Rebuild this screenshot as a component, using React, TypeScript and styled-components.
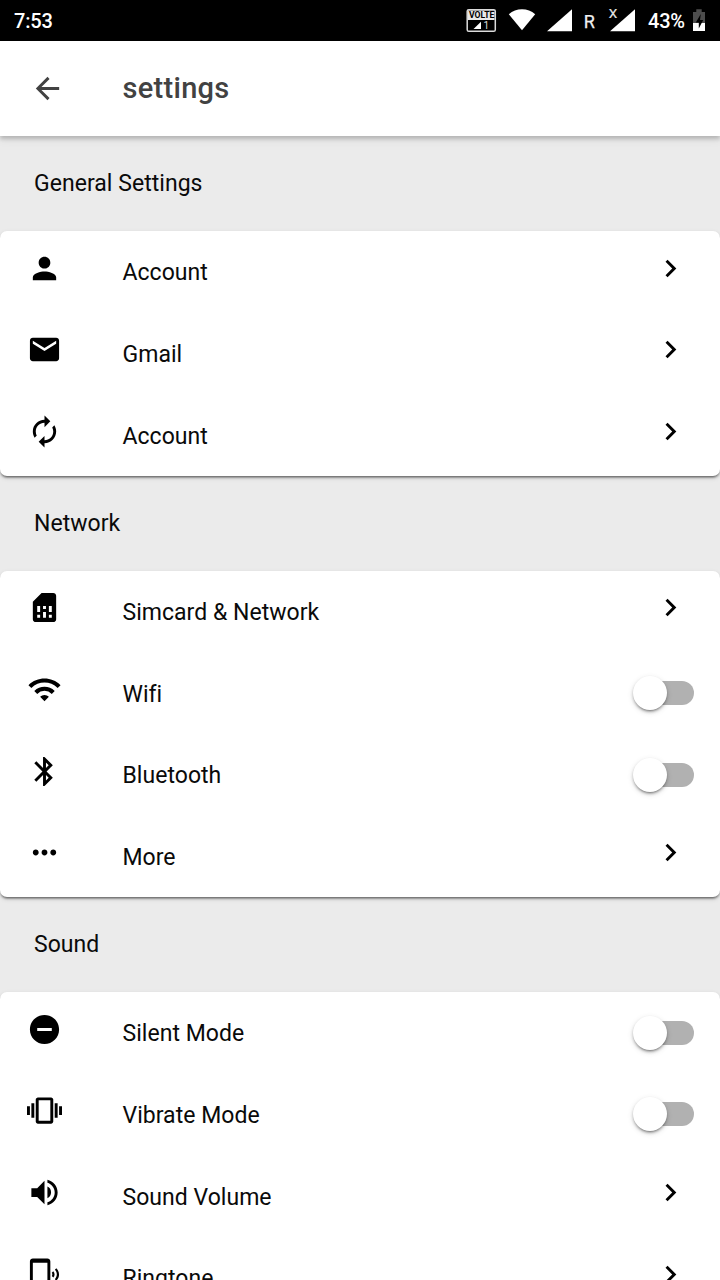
import React from "react";
import styled, { createGlobalStyle } from "styled-components";
import type { IconType } from "react-icons";
import {
  MdArrowBack,
  MdAutorenew,
  MdBluetooth,
  MdChevronRight,
  MdEmail,
  MdMoreHoriz,
  MdPerson,
  MdPhonelinkRing,
  MdRemoveCircle,
  MdSimCard,
  MdVibration,
  MdVolumeUp,
  MdWifi,
} from "react-icons/md";

const GlobalStyle = createGlobalStyle`
  * { box-sizing: border-box; }
  html, body { margin: 0; height: 100%; overflow: hidden; }
  #root { height: 100%; }
  body { background: #ebebeb; font-family: Roboto, "Liberation Sans", sans-serif; }
`;

const Screen = styled.div`
  width: 720px;
  height: 1280px;
  overflow: hidden;
  display: flex;
  flex-direction: column;
  background: #ebebeb;
  color: #0a0a0a;
`;

const StatusBar = styled.div`
  flex: none;
  height: 41px;
  padding: 0 14px;
  display: flex;
  align-items: center;
  justify-content: space-between;
  background: #000;
  color: #fff;
  font-size: 20px;
  font-weight: 500;
`;

const Clock = styled.span`
  letter-spacing: -0.15px;
`;

const StatusIcons = styled.svg`
  display: block;
  width: 254px;
  height: 41px;
  margin-right: -14px;
  font-weight: 400;
`;

const AppBar = styled.header`
  flex: none;
  height: 95px;
  display: flex;
  align-items: center;
  padding-left: 30px;
  background: #fff;
  color: #424242;
  box-shadow: 0 3px 4px rgba(0, 0, 0, 0.2), 0 6px 8px rgba(0, 0, 0, 0.04);
  z-index: 1;
`;

const BackIcon = styled(MdArrowBack)`
  width: 35px;
  height: 35px;
`;

const Title = styled.h1`
  margin: 0 0 2px 57.5px;
  font-size: 29px;
  font-weight: 500;
  letter-spacing: 0.3px;
`;

const SectionTitle = styled.h2`
  flex: none;
  height: 94.8px;
  margin: 0;
  padding-left: 34px;
  display: flex;
  align-items: center;
  font-size: 23px;
  font-weight: 400;
  letter-spacing: 0.04px;
`;

const Card = styled.section`
  flex: none;
  background: #fff;
  border-radius: 7px;
  box-shadow: 0 3px 2px -2px rgba(0, 0, 0, 0.34), 0 2px 2px rgba(0, 0, 0, 0.24),
    0 2px 5px rgba(0, 0, 0, 0.14);
`;

const Row = styled.div`
  height: 81.66px;
  display: flex;
  align-items: center;
  padding: 0 26px 0 27px;
`;

const iconBox = `
  flex: none;
  width: 35px;
  height: 35px;
  margin-bottom: 7px;
  color: #000;
`;

const RowIcon = styled.span`
  ${iconBox}
  display: flex;
  svg { width: 100%; height: 100%; }
`;

const Chevron = styled(MdChevronRight)`
  ${iconBox}
  margin-right: 6px;
`;

const Label = styled.span`
  flex: 1;
  margin-left: 60.5px;
  padding-top: 2.24px;
  font-size: 23px;
  letter-spacing: 0.03px;
`;

const Switch = styled.button`
  flex: none;
  width: 61px;
  height: 34px;
  padding: 0 0 0 5px;
  border: 0;
  background: none;
  display: flex;
  align-items: center;
`;

const Track = styled.span`
  flex: 1;
  height: 24px;
  border-radius: 12px;
  background: #b1b1b1;
  display: flex;
  align-items: center;
`;

const Thumb = styled.span`
  flex: none;
  width: 34px;
  height: 34px;
  margin-left: -5px;
  border-radius: 50%;
  background: #fff;
  box-shadow: 0 3px 2px -2px rgba(0, 0, 0, 0.3), 0 2px 3px rgba(0, 0, 0, 0.24),
    0 2px 6px rgba(0, 0, 0, 0.12);
`;

type Item = { icon: IconType; label: string; toggle?: boolean };

const sections: { title: string; items: Item[] }[] = [
  {
    title: "General Settings",
    items: [
      { icon: MdPerson, label: "Account" },
      { icon: MdEmail, label: "Gmail" },
      { icon: MdAutorenew, label: "Account" },
    ],
  },
  {
    title: "Network",
    items: [
      { icon: MdSimCard, label: "Simcard & Network" },
      { icon: MdWifi, label: "Wifi", toggle: true },
      { icon: MdBluetooth, label: "Bluetooth", toggle: true },
      { icon: MdMoreHoriz, label: "More" },
    ],
  },
  {
    title: "Sound",
    items: [
      { icon: MdRemoveCircle, label: "Silent Mode", toggle: true },
      { icon: MdVibration, label: "Vibrate Mode", toggle: true },
      { icon: MdVolumeUp, label: "Sound Volume" },
      { icon: MdPhonelinkRing, label: "Ringtone" },
    ],
  },
];

function StatusGlyphs() {
  return (
    <StatusIcons viewBox="466 0 254 41" fill="#fff" fontFamily="Roboto, sans-serif">
      <rect x="467.2" y="9.7" width="28.1" height="21.6" rx="1.6" fill="#000" stroke="#dcdcdc" strokeWidth="1.5" />
      <rect x="468" y="10.5" width="26.5" height="9.5" fill="#e8e8e8" />
      <text x="469" y="18" fontSize="8.4" fontWeight="700" fill="#000" textLength="25.4" lengthAdjust="spacingAndGlyphs">
        VOLTE
      </text>
      <path d="M473.5 29 L481 21.8 V29Z" />
      <text x="483.6" y="29" fontSize="10" fill="#ddd">1</text>
      <path d="M522 30.3 L508.8 14.3 Q514.5 9.3 522 9.3 Q529.5 9.3 535.2 14.3Z" />
      <path d="M547 31.2 L572 9.3 V31.2Z" />
      <text x="583.8" y="28.3" fontSize="18" fill="#f0f0f0" stroke="#f0f0f0" strokeWidth="0.25">R</text>
      <text x="608.8" y="18" fontSize="13.5" fill="#e8e8e8" stroke="#e8e8e8" strokeWidth="0.2">X</text>
      <path d="M610 31.2 L635 9.3 V31.2Z" />
      <text x="648" y="28" fontSize="20" fontWeight="500" textLength="37">43%</text>
      <path d="M693 12 H696.3 V9.3 H701.7 V12 H705 V23 H693Z" fill="#4d4d4d" />
      <path d="M693 23 H705 V31 H693Z" />
      <path d="M700.8 14 L695.8 22.6 H698.8 V28.5 L703.2 20 H700Z" fill="#000" />
    </StatusIcons>
  );
}

function SettingRow({ icon: Icon, label, toggle }: Item) {
  return (
    <Row>
      <RowIcon>
        <Icon />
      </RowIcon>
      <Label>{label}</Label>
      {toggle ? (
        <Switch role="switch" aria-checked={false} aria-label={label}>
          <Track>
            <Thumb />
          </Track>
        </Switch>
      ) : (
        <Chevron />
      )}
    </Row>
  );
}

export default function App() {
  return (
    <Screen>
      <GlobalStyle />
      <StatusBar>
        <Clock>7:53</Clock>
        <StatusGlyphs />
      </StatusBar>
      <AppBar>
        <BackIcon />
        <Title>settings</Title>
      </AppBar>
      {sections.map((section) => (
        <React.Fragment key={section.title}>
          <SectionTitle>{section.title}</SectionTitle>
          <Card>
            {section.items.map((item, i) => (
              <SettingRow key={i} {...item} />
            ))}
          </Card>
        </React.Fragment>
      ))}
    </Screen>
  );
}
